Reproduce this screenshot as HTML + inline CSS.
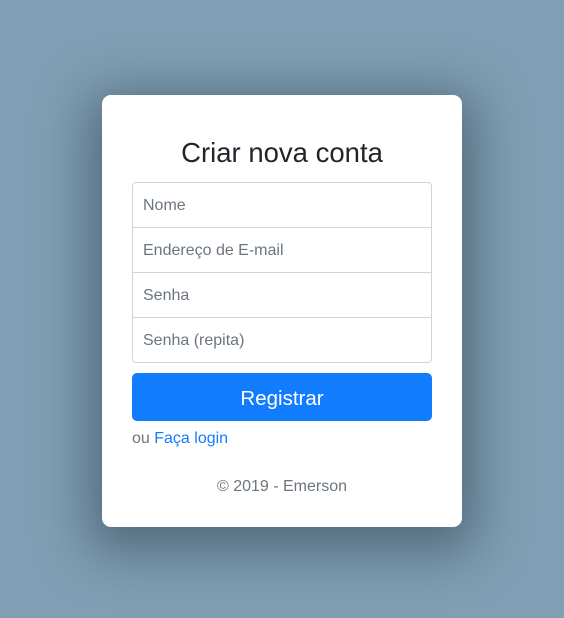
<!DOCTYPE html>
<html><head><style>
html,body{margin:0;height:618px;width:564px;overflow:hidden}
body{background:#809fb4;font-family:"Liberation Sans","DejaVu Sans",sans-serif;position:relative}
.card{position:absolute;left:102px;top:95px;width:360px;height:432px;background:#fff;border-radius:9px;box-shadow:0 12px 50px 14px rgba(40,55,70,.5)}
h1{position:absolute;left:0;right:0;top:137px;margin:0;text-align:center;font-weight:400;font-size:27.5px;color:#212529}
.inp{position:absolute;left:132px;width:298px;height:44px;border:1px solid #ced4da;background:#fff;font-size:16px;color:#6c757d;line-height:46px;text-indent:10px}
.btn{position:absolute;left:132px;top:373px;width:300px;height:48px;background:#117cfe;border-radius:5px;color:#fff;font-size:20.5px;text-align:center;line-height:51px}
.ou{position:absolute;left:132px;top:430px;font-size:16px;color:#6c757d}
.ou span{color:#117cfe}
.ft{position:absolute;left:102px;width:360px;top:478px;text-align:center;font-size:16px;color:#6c757d}
</style></head><body>
<div class="card"></div>
<h1>Criar nova conta</h1>
<div class="inp" style="top:182px;border-radius:4px 4px 0 0">Nome</div>
<div class="inp" style="top:227px">Endereço de E-mail</div>
<div class="inp" style="top:272px">Senha</div>
<div class="inp" style="top:317px;border-radius:0 0 4px 4px">Senha (repita)</div>
<div class="btn">Registrar</div>
<div class="ou">ou <span>Faça login</span></div>
<div class="ft">© 2019 - Emerson</div>
</body></html>
